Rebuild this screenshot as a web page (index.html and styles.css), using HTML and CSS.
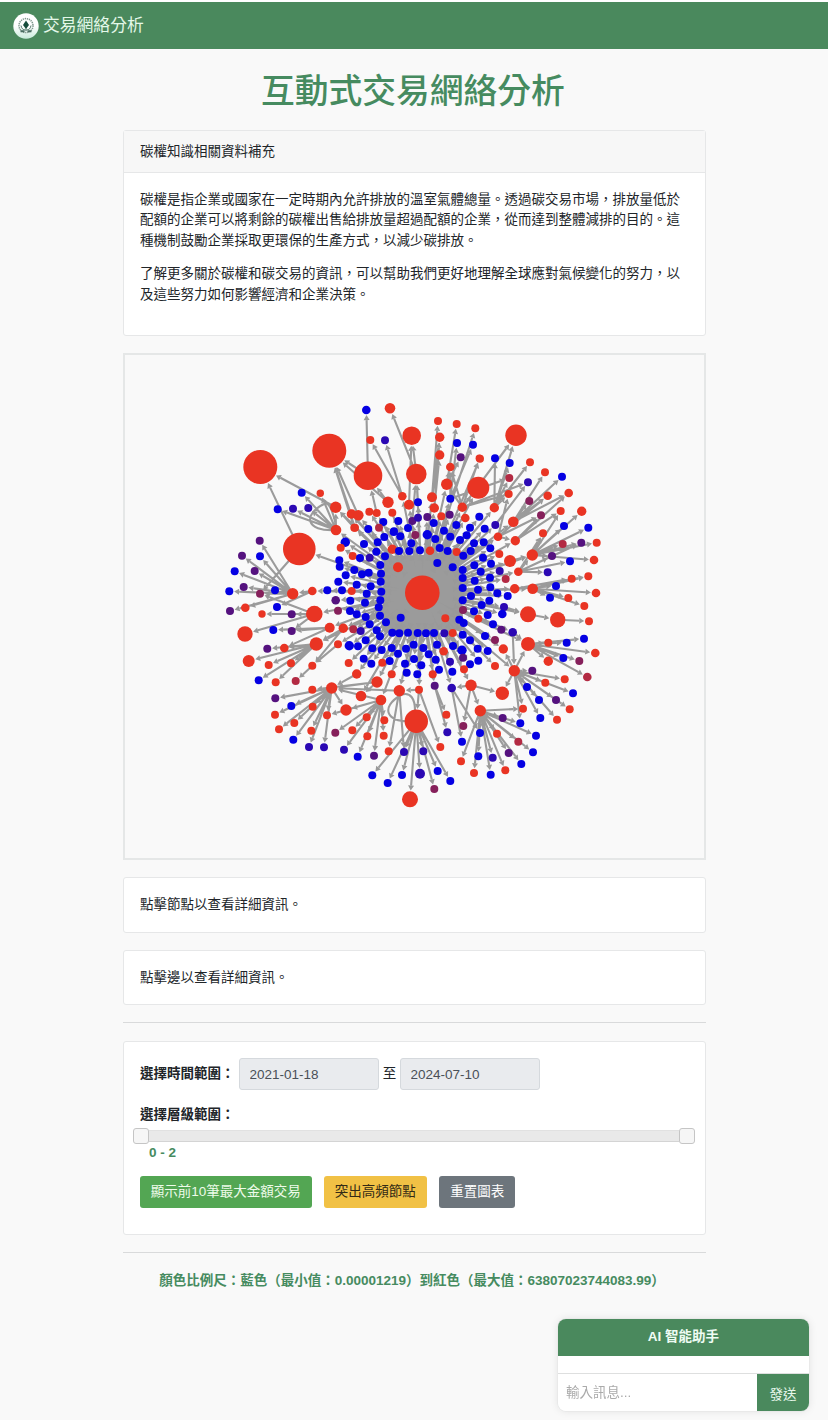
FILE: index.html
```html
<!DOCTYPE html>
<html lang="zh-Hant">
<head>
<meta charset="utf-8">
<title>交易網絡分析</title>
<link rel="stylesheet" href="styles.css">
</head>
<body>
<nav class="navbar">
  <svg class="logo" viewBox="0 0 26 26">
    <defs><linearGradient id="lg" x1="0" y1="0" x2="0" y2="1"><stop offset=".5" stop-color="#fff"/><stop offset="1" stop-color="#c9eadb"/></linearGradient></defs>
    <circle cx="13" cy="13" r="12.7" fill="url(#lg)"/>
    <circle cx="13" cy="12.600" r="7" fill="none" stroke="#7d978c" stroke-width="1.5" stroke-dasharray="1.3 .8"/>
    <path d="M13 7.5l3 4.5-3 4-3-4z" fill="#174d3c"/>
    <path d="M13 15v3M8 12.5c.5 3 2 4.500 4.500 4.500M18 12.500c-.5 3-2 4.500-4.500 4.500" stroke="#54786b" fill="none"/>
    <path d="M7.500 18.300h4M14.500 18.300h4" stroke="#486c60" stroke-width="2"/>
  </svg>
  <span class="brand">交易網絡分析</span>
</nav>
<main class="container">
  <h1 class="title">互動式交易網絡分析</h1>
  <section class="card">
    <div class="card-header">碳權知識相關資料補充</div>
    <div class="card-body knowledge">
      <p>碳權是指企業或國家在一定時期內允許排放的溫室氣體總量。透過碳交易市場，排放量低於配額的企業可以將剩餘的碳權出售給排放量超過配額的企業，從而達到整體減排的目的。這種機制鼓勵企業採取更環保的生產方式，以減少碳排放。</p>
      <p>了解更多關於碳權和碳交易的資訊，可以幫助我們更好地理解全球應對氣候變化的努力，以及這些努力如何影響經濟和企業決策。</p>
    </div>
  </section>
  <section class="network">
    <svg id="graph" viewBox="125 355 578 503"></svg>
  </section>
  <section class="card info">點擊節點以查看詳細資訊。</section>
  <section class="card info">點擊邊以查看詳細資訊。</section>
  <hr class="rule">
  <section class="card controls">
    <div class="date-row">
      <label class="label">選擇時間範圍：</label>
      <input class="date" type="text" value="2021-01-18" readonly>
      <span class="to">至</span>
      <input class="date" type="text" value="2024-07-10" readonly>
    </div>
    <label class="label level">選擇層級範圍：</label>
    <div class="slider"><span class="handle"></span><span class="track"></span><span class="handle"></span></div>
    <div class="range-value">0 - 2</div>
    <div class="buttons">
      <button class="btn green">顯示前10筆最大金額交易</button>
      <button class="btn yellow">突出高頻節點</button>
      <button class="btn gray">重置圖表</button>
    </div>
  </section>
  <hr class="rule">
  <div class="scale">顏色比例尺：藍色（最小值：0.00001219）到紅色（最大值：63807023744083.99）</div>
</main>
<aside class="chat">
  <div class="chat-head">AI 智能助手</div>
  <div class="chat-log"></div>
  <div class="chat-form">
    <input class="chat-input" type="text" placeholder="輸入訊息...">
    <button class="chat-send">發送</button>
  </div>
</aside>
<script src="graph.js"></script>
</body>
</html>
```
FILE: styles.css
```css
* { box-sizing: border-box; }
body {
  margin: 0;
  padding-top: 2px;
  min-height: 1420px;
  background: linear-gradient(#fff 2px, #f9f9f9 2px);
  color: #212529;
  font: 13.5px/20.25px "Liberation Sans", "Noto Sans CJK TC", sans-serif;
}
.navbar {
  display: flex;
  align-items: center;
  gap: 4px;
  height: 47px;
  padding: 0 13px;
  background: #4a895d;
}
.logo { width: 26px; height: 26px; }
.brand { color: #e4f8e9; font-size: 16.800px; line-height: 24px; margin-top: 1px; }
.container { width: 583px; margin: 0 0 0 122.5px; }
.title {
  margin: 0;
  height: 81px;
  padding: 21px 2px 0 0;
  font-size: 33.75px;
  line-height: 42px;
  font-weight: 500;
  text-align: center;
  color: #468b60;
}
.card {
  background: #fff;
  border: 1px solid #e6e7e8;
  border-radius: 3px;
}
.card-header {
  height: 42px;
  padding: 11px 16.500px;
  background: #f7f7f7;
  border-bottom: 1px solid #e6e7e8;
}
.knowledge { height: 162px; padding: 17px 16.500px; }
.knowledge p { margin: 0 0 13.5px; width: 544px; }
.network {
  margin: 17px 0 17px;
  height: 507px;
  border: 2px solid #e5e7e7;
  background: #f9f9f9;
}
#graph { display: block; width: 578px; height: 503px; }
.info { height: 55.5px; padding: 17px 16.500px; margin-bottom: 17px; }
.rule { height: 1px; margin: 0 0 18px; border: 0; background: #d9dadb; }
.controls { height: 194px; margin-bottom: 17px; padding: 16px 9.500px 0; }
.date-row { display: flex; align-items: center; padding-left: 7px; height: 32px; }
.label { font-weight: bold; }
.date-row .label { width: 99px; }
.to { width: 21px; text-align: center; }
.date {
  width: 140px;
  height: 32px;
  padding: 0 9.500px;
  border: 1px solid #d5d9dd;
  border-radius: 3px;
  background: #e9ebee;
  color: #495057;
  font: 13.5px "Liberation Sans", sans-serif;
}
.level { display: block; margin: 15px 0 2px 7px; }
.slider { display: flex; align-items: center; height: 17px; }
.handle {
  flex: none;
  width: 16px;
  height: 16px;
  border: 1px solid #c5c5c5;
  border-radius: 3px;
  background: #f6f6f6;
}
.track { flex: 1; height: 12px; background: #e9e9e9; border-top: 1px solid #e1e1e1; border-bottom: 1px solid #d4d4d4; }
.range-value { margin: -1px 0 0 16px; font-weight: bold; color: #468b60; }
.buttons { display: flex; gap: 12px; margin: 12px 0 0 7px; }
.btn {
  height: 32px;
  padding: 0 11.200px;
  border: 0;
  border-radius: 3px;
  font: 13.5px/20px "Liberation Sans", "Noto Sans CJK TC", sans-serif;
  white-space: nowrap;
}
.green { padding: 0 10.800px; background: #53a653; color: #eefbea; }
.yellow { background: #f1c145; color: #332a15; }
.gray { background: #6d757c; color: #fff; }
.scale { padding-right: 4px; text-align: center; font-weight: bold; color: #468b60; }
.chat {
  position: fixed;
  left: 558px;
  top: 1319px;
  width: 251px;
  height: 92px;
  overflow: hidden;
  background: #fff;
  border-radius: 8px;
  box-shadow: 0 0 1px #b5bab7, 0 0 8px rgba(0, 0, 0, .1);
}
.chat-head { height: 37px; line-height: 36px; text-align: center; font-weight: bold; color: #effcf3; background: #4a895d; }
.chat-log { height: 18px; border-bottom: 1px solid #dedfdf; }
.chat-form { display: flex; height: 37px; }
.chat-input { flex: 1; min-width: 0; border: 0; padding: 0 8px; font: 13.5px "Liberation Sans", "Noto Sans CJK TC", sans-serif; }
.chat-input::placeholder { color: #aaa; }
.chat-send { width: 52px; border: 0; padding: 0; background: #4a895d; color: #e8f8ec; font: 13.5px "Liberation Sans", "Noto Sans CJK TC", sans-serif; }
```
FILE: graph.js
```js
const COLORS = { r: '#e93423', b: '#0500e3', n: '#2b08b3', p: '#55127f', m: '#86205b', c: '#b32a43' };
// Each sector stores its nodes in thirds of a pixel, relative to its own origin.
const ORIGIN = { A: [220, 395], B: [350, 395], C: [475, 395], D: [220, 530], E: [350, 530], F: [475, 530], G: [220, 665], H: [350, 665], I: [475, 665] };
const NODES = {
  A: 'r 121 216 51;r 328 167 51;b 245 293;r 301 295 11;b 173 343;n 219 341;n 265 339;r 347 337 17;r 393 357 13;r 348 405 16;r 403 398',
  B: 'b 49 45 13;r 120 40 16;r 61 135;n 105 136;r 185 122 28;r 264 78;r 320 87;r 376 100;r 269 127 14;b 321 144;b 369 149;r 269 180 14;p 332 187;r 54 242 43;r 199 237 31;r 301 216 13;r 388 190 11;r 290 268 17;r 385 278 33;r 157 304 13;r 114 322 17;r 177 329 15;b 204 322;r 246 307 15;b 301 311;r 253 339 14;r 337 337 14;r 346 369 13;r 274 364;p 299 359;r 5 357 14;r 25 361 16;r 58 350;r 80 354;r 127 353;b 100 381;b 145 378;p 187 378;n 204 368;p 232 366;b 251 384;b 319 390;b 360 398;r 15 398;b 55 402;c 87 398;b 132 409;b 174 399;b 282 407;b 388 365',
  C: 'r 123 121 32;r 15 191;b 60 190;b 104 204;r 165 202;r 210 232;b 261 245;c 103 249;n 159 262;r 101 297;m 163 318;r 218 302 13;r 281 294 13;r 58 338 14;n 61 390;b 29 401;r 115 380 16;m 198 361;r 257 348;r 320 349 14;b 267 393;b 340 398',
  D: 'p 119 32;p 66 77;b 120 79;b 44 124;p 104 123;b 28 184;p 71 171;m 120 191;b 165 181;r 218 191 17;r 277 183 13;b 322 181;b 366 181;r 395 183;p 30 243;r 76 233 13;b 171 231;r 126 252 11;p 215 253;r 283 252 25;p 347 211 13;b 391 212;m 354 242;b 390 243;r 75 312 23;b 160 300;p 215 303;r 329 293 15;r 370 295 14;p 142 356;r 193 354 13;r 289 342 20;r 354 343;b 388 347 14;r 86 393 18;r 146 405;r 213 400;r 277 407;r 386 399;b 376 37 14;r 362 53;r 398 78;b 358 91;b 359 110;b 377 136;b 355 155;r 238 57 49',
  E: 'b 131 6;b 151 19;m 196 15;b 232 14 14;b 42 42;b 83 37;b 103 21;b 184 40;b 256 27;b 301 20;b 330 30;b 350 16;b 372 40;r 127 58 14;b 147 63;b 178 63;b 210 61;r 240 62 13;b 269 54;b 293 63;r 320 66;b 362 63;b 340 77;b 79 65;b 105 79;b 30 84;n 59 83;b 262 99;b 91 105;r 144 112 15;b 308 112;b 373 106;b 338 120;b 13 120;b 36 133;b 56 128;b 93 131;b 338 144;b 374 152;b 92 155;b 20 164;b 62 169;b 338 174;b 94 185;b 50 191;b 363 198;r 217 188 52;b 91 211;b 45 218;b 338 211;b 86 232;m 339 240;b 372 244;b 20 253;b 47 261;b 90 257;r 385 266;b 152 263;r 286 265;b 328 269;b 341 279;b 108 277;b 59 283;c 10 298;n 32 303;b 80 301;b 90 319;b 127 308;b 148 310;b 174 308;b 203 309;b 228 310;b 252 309;n 283 310;r 308 309;b 338 314;b 47 331;b 360 331;b 24 349;b 67 355;b 95 360;b 125 354;b 168 356;b 191 344;b 220 354;b 261 344;r 281 364 13;b 309 348;b 336 361 14;b 144 371;b 236 373;b 257 389;p 339 383;n 300 395;b 41 386;b 64 401;r 97 398;b 119 393;b 192 387;b 165 401;b 214 406;b 360 403;b 383 356;b 385 392',
  F: 'r 69 20 13;r 121 32 14;r 204 10;c 263 42;p 319 38;r 365 38;b 26 37;b 46 55;r 73 72;r 172 75 17;p 231 78;b 285 94;r 357 90 13;b 24 83;r 105 93 18;b 48 101;b 17 125;n 74 123;r 130 125 13;n 218 127;b 45 143;c 92 147;r 290 146;r 340 139;b 9 179;b 46 172;r 119 176 14;r 173 176 16;b 243 168;r 363 189 13;b 67 190;b 98 198;b 225 203;r 280 204;b 43 212;b 20 225;n 87 231;r 328 228;b 82 252 13;b 38 255;r 159 253 24;r 248 269 23;r 342 274;b 54 283;p 79 299;n 113 307 13;b 30 318;m 60 330;b 327 326;r 159 342 21;r 220 338;b 275 338;r 85 357 14;b 38 363;r 361 369 13;b 265 384;r 220 394 14;m 313 393',
  G: 'b 116 46;r 167 52;c 227 48;r 277 74;r 335 69 17;p 166 100;b 214 123;r 278 125;r 321 151;r 165 149;r 378 135 17;r 223 174;r 177 193;r 274 197;m 346 203;b 220 224;n 267 246;n 312 247;n 372 254',
  H: 'r 20 27 14;r 125 28;b 170 23;b 202 28;b 267 14;b 307 20;r 248 28;r 342 13;r 81 51 17;p 254 62;r 148 77 17;r 207 74;n 305 69 13;r 363 61 17;r 33 93 16;r 93 105 16;r 50 157;r 103 166;r 289 149;r 199 169 35;m 340 183;n 292 202;r 7 196;r 52 214;r 101 212;r 271 246;b 336 230;b 23 275;p 72 272;r 116 259;n 162 261;n 220 259;r 333 289;r 372 324;b 67 331;b 156 330;b 263 318;n 210 326 15;b 113 354;b 301 348;m 253 372;r 180 403 24',
  I: 'r 60 3;r 118 17 17;p 172 17;r 269 43;c 337 36 13;r 211 53;b 156 66;b 294 85;b 192 105;p 243 105;r 82 85 20;r 284 133;r 16 137 17;r 144 131;p 83 159;b 196 159;r 246 164;b 136 175;b 15 204;r 66 206;b 183 212;c 130 230;p 101 264;b 174 262;b 10 274;n 53 278;b 139 297;r 91 316;b 47 329'
};
// "sector source > targets"
const EDGES = `D 218 191>119 32,66 77,120 79,44 124,104 123,28 184,71 171,120 191,165 181,76 233,30 243
D 283 252>215 253,126 252,120 191,75 312,215 303
D 277 183>218 191,171 231
D 395 183>366 181,322 181,277 183
D 238 57>120 191,121 -189
D 289 342>193 354,142 356,86 393,146 405,213 400,116 451,167 457
D 329 293>160 300,215 303,193 354
D 370 295>289 342,277 407
D 354 343>277 407
D 277 407>227 453
A 347 337>121 216
A 348 405>173 343,219 341,265 339,245 293,301 295,347 337
B 25 361>-62 167
A 403 398>347 337,328 167
A 393 357>328 167
B 114 322>-62 167,54 242
B 15 398>-62 167
B 54 242>49 45,-62 167
B 80 354>54 242
B 157 304>61 135,105 136
B 199 237>120 40,185 122
B 177 329>185 122
B 187 378>199 237
B 204 322>199 237
B 246 307>269 180,269 127,264 78
B 253 339>269 180,269 127
B 290 268>320 87,332 187,301 216
B 301 311>301 216,369 149,321 144
B 337 337>388 190,301 216,385 278,290 268
C 58 338>60 190,104 204,123 121,103 249,101 297,165 202
C -38 337>101 297,159 262,123 121
C -75 311>103 249
C 61 390>159 262
C 115 380>210 232,261 245,281 294,218 302,163 318
C 69 426>198 361,218 302,101 297
C 121 437>257 348,198 361,281 294
F 172 75>320 -56,267 -12,340 -7,257 -57,263 42,319 38,365 38,204 10,231 78,357 90
F 130 125>231 78,285 94,218 127,172 75,319 38,204 10
F 105 93>172 75
F 69 20>121 32
F 119 176>243 168,290 146,340 139,173 176
F 173 176>290 146,340 139,363 189,225 203,280 204,328 228
F 20 225>159 253
F 87 231>159 253
F 159 253>248 269
F 248 269>342 274
F 159 342>220 338,275 338,327 326,361 369,265 384,313 393,220 394,337 441
F 118 422>159 342,85 357
F 113 307>118 422,159 342
I 118 17>172 17,269 43,211 53,156 66,294 85,192 105,243 105,284 133,196 159,246 164,144 131,136 175,82 85
I 16 137>144 131,83 159,136 175,183 212,130 230,174 262,101 264,66 206,139 297,91 316,53 278,47 329,10 274,15 204,-42 289,-3 324
H 363 61>391 137,457 85,340 183,305 69
H 305 69>336 230,390 204
H 254 62>289 149,292 202
H 248 28>254 62
H 207 74>271 246,199 169,148 77
H 148 77>116 259,162 261,-55 69
H 199 169>67 331,113 354,156 330,162 261,210 326,220 259,263 318,301 348,253 372,180 403
H 93 105>50 157,7 196,52 214,23 275,72 272,103 166,101 212,-44 203,-18 254,-12 135,-69 151,-55 69
H 81 51>33 93,-55 69,-112 74
H 20 27>-55 69
G 335 69>277 74,166 100,214 123,165 149,278 125,223 174,177 193,274 197,220 224,267 246,312 247,321 151,378 135`;

const nodes = [];
for (const [key, list] of Object.entries(NODES)) {
  const [ox, oy] = ORIGIN[key];
  for (const item of list.split(';')) {
    const [c, x, y, r] = item.split(' ');
    nodes.push({ c, x: ox + x / 3, y: oy + y / 3, r: (r || 12) / 3 });
  }
}
const nearest = (x, y) => nodes.reduce((a, n) => Math.hypot(n.x - x, n.y - y) < Math.hypot(a.x - x, a.y - y) ? n : a);
const center = nearest(422, 593);
const lines = [];
const heads = [];
function edge(s, t) {
  const dx = t.x - s.x, dy = t.y - s.y, d = Math.hypot(dx, dy);
  if (d < 1) return;
  const ux = dx / d, uy = dy / d;
  const tx = t.x - ux * (t.r + .8), ty = t.y - uy * (t.r + .8);
  const bx = tx - ux * 5, by = ty - uy * 5;
  lines.push(`M${s.x.toFixed(1)} ${s.y.toFixed(1)}L${bx.toFixed(1)} ${by.toFixed(1)}`);
  heads.push(`M${tx.toFixed(1)} ${ty.toFixed(1)}L${(bx - uy * 3).toFixed(1)} ${(by + ux * 3).toFixed(1)}L${(bx + uy * 3).toFixed(1)} ${(by - ux * 3).toFixed(1)}Z`);
}
const linked = new Set();
for (const row of EDGES.split('\n')) {
  const [src, targets] = row.split('>');
  const [key, sx, sy] = src.split(' ');
  const [ox, oy] = ORIGIN[key];
  const s = nearest(ox + sx / 3, oy + sy / 3);
  for (const t of targets.split(',')) {
    const [x, y] = t.split(' ');
    const n = nearest(ox + x / 3, oy + y / 3);
    linked.add(n);
    edge(s, n);
  }
}
for (const n of nodes) {
  const d = Math.hypot(n.x - center.x, n.y - center.y);
  if (n !== center && (d < 122 || !linked.has(n))) edge(center, n);
}
const loops = 'M336 530C305 532 302 514 326 503C331 505 334 516 336 526M416 721C385 724 380 707 401 695C411 691 415 700 415 710';
const core = 'M384 556L458 554L464 630L382 631Z';
document.getElementById('graph').innerHTML =
  `<path d="${core}" fill="#999"/>` +
  `<path d="${lines.join('')}${loops}" fill="none" stroke="#9b9b9b" stroke-width="2.1"/>` +
  `<path d="${heads.join('')}" fill="#999"/>` +
  nodes.map(n => `<circle cx="${n.x.toFixed(1)}" cy="${n.y.toFixed(1)}" r="${n.r.toFixed(1)}" fill="${COLORS[n.c]}"/>`).join('');
```
